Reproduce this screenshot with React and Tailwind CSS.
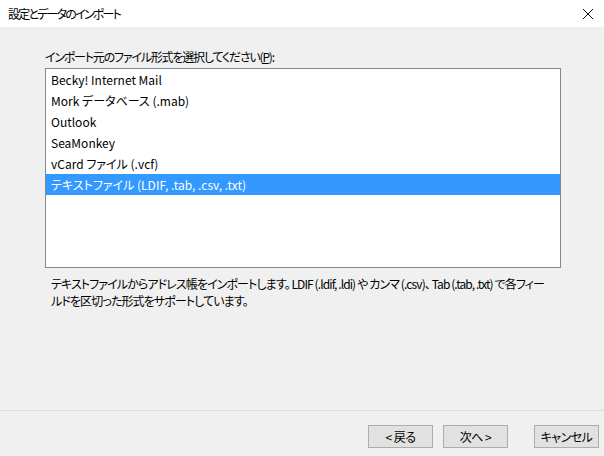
import React from "react";

const formats = [
  "Becky! Internet Mail",
  "Mork データベース (.mab)",
  "Outlook",
  "SeaMonkey",
  "vCard ファイル (.vcf)",
  "テキストファイル (LDIF, .tab, .csv, .txt)",
];

const font = {
  fontFamily: '"Noto Sans CJK JP", "Noto Sans", sans-serif',
  fontFeatureSettings: '"palt"',
};

function Btn({ children, className = "" }) {
  return (
    <button
      className={
        "w-[65px] h-[23px] border border-[#adadad] bg-[#e1e1e1] text-[12px] text-[#000] leading-none whitespace-nowrap tracking-[-0.5px] flex items-center justify-center " +
        className
      }
    >
      {children}
    </button>
  );
}

export default function App() {
  const selected = 5;
  return (
    <div
      className="w-[604px] h-[456px] bg-[#f0f0f0] flex flex-col text-[#000] overflow-hidden"
      style={font}
    >
      {/* title bar */}
      <div className="h-[27px] bg-white flex items-center justify-between pl-[8px] pr-[6px] shrink-0">
        <span className="text-[12px] tracking-[-1.8px]">設定とデータのインポート</span>
        <svg width="12" height="12" viewBox="0 0 12 12" className="mr-[4px]">
          <path d="M1 1 L11 11 M11 1 L1 11" stroke="#111" strokeWidth="1" />
        </svg>
      </div>

      {/* body */}
      <div className="flex-1 flex flex-col pl-[45px] pr-[43px]">
        <div className="h-[41px] flex items-end pb-[2px] text-[12px] tracking-[-1.2px]">
          インポート元のファイル形式を選択してください(<span className="underline">P</span>):
        </div>
        <div className="h-[200px] border border-[#828790] bg-white flex flex-col">
          {formats.map((f, i) => (
            <div
              key={f}
              className={
                "h-[21px] shrink-0 flex items-center pl-[5px] text-[12px] " +
                (i === selected ? "bg-[#3399ff] text-white" : "")
              }
            >
              {f}
            </div>
          ))}
        </div>
        <p className="mt-[7px] pl-[6px] text-[12px] leading-[17px] whitespace-nowrap tracking-[-0.9px]">
          テキストファイルからアドレス帳をインポートします。 LDIF (.ldif, .ldi) や カンマ (.csv)、 Tab (.tab, .txt) で各フィー
          <br />
          ルドを区切った形式をサポートしています。
        </p>
      </div>

      {/* footer */}
      <div className="h-[46px] border-t border-[#dfdfdf] flex items-start pt-[14px] pl-[368px] shrink-0">
        <Btn>&lt; 戻る</Btn>
        <Btn className="ml-[10px]">次へ &gt;</Btn>
        <Btn className="ml-[26px]">キャンセル</Btn>
      </div>
    </div>
  );
}
